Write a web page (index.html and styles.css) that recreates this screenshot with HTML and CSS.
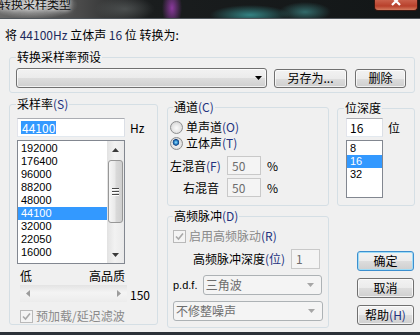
FILE: index.html
```html
<!DOCTYPE html>
<html lang="zh-CN">
<head>
    <meta charset="UTF-8">
    <title>转换采样类型</title>
    <link rel="stylesheet" href="styles.css">
</head>
<body>
<div class="window">
    <div class="titlebar">
        <span class="title">转换采样类型</span>
        <span class="close">
            <svg width="12" height="7" viewBox="0 0 12 7"><path d="M2 -3 L10 5 M10 -3 L2 5" stroke="#fff" stroke-width="2.2"/></svg>
        </span>
    </div>
    <div class="dialog">
        <p class="caption">将 <span class="lat">44100Hz</span> 立体声 <span class="lat">16</span> 位 转换为:</p>

        <fieldset class="group preset">
            <legend>转换采样率预设</legend>
            <div class="row">
                <div class="combo preset-combo">
                    <svg class="arrow" width="7" height="4" viewBox="0 0 7 4"><path d="M0 0 H7 L3.5 4Z" fill="#000"/></svg>
                </div>
                <button class="btn save">另存为...</button>
                <button class="btn del">删除</button>
            </div>
        </fieldset>

        <div class="columns">
            <!-- sample rate -->
            <fieldset class="group rate">
                <legend>采样率<span class="acc">(S)</span></legend>
                <div class="row">
                    <div class="edit rate-edit"><span class="sel">44100</span></div>
                    <span class="unit">Hz</span>
                </div>
                <div class="list rate-list">
                    <ul class="items">
                        <li>192000</li>
                        <li>176400</li>
                        <li>96000</li>
                        <li>88200</li>
                        <li>48000</li>
                        <li class="selected">44100</li>
                        <li>32000</li>
                        <li>22050</li>
                        <li>16000</li>
                    </ul>
                    <div class="vscroll">
                        <span class="sb-btn"><svg width="7" height="4" viewBox="0 0 7 4"><path d="M0 4 L3.5 0 L7 4Z" fill="#3a3a3a"/></svg></span>
                        <span class="thumb"><i></i><i></i><i></i></span>
                        <span class="sb-btn down"><svg width="7" height="4" viewBox="0 0 7 4"><path d="M0 0 H7 L3.5 4Z" fill="#3a3a3a"/></svg></span>
                    </div>
                </div>
                <div class="quality"><span>低</span><span>高品质</span></div>
                <div class="row slider-row">
                    <div class="hscroll">
                        <svg width="4" height="7" viewBox="0 0 4 7"><path d="M4 0 V7 L0 3.5Z" fill="#9c9c9c"/></svg>
                        <svg width="4" height="7" viewBox="0 0 4 7"><path d="M0 0 V7 L4 3.5Z" fill="#9c9c9c"/></svg>
                    </div>
                    <span class="value">150</span>
                </div>
                <div class="check disabled rate-check">
                    <span class="box"><svg width="9" height="9" viewBox="0 0 9 9"><path d="M1 4.5 L3.5 7 L8 1.5" fill="none" stroke="#a8a8a8" stroke-width="1.6"/></svg></span>
                    <span>预加载/延迟滤波</span>
                </div>
            </fieldset>

            <div class="col mid">
                <fieldset class="group channel">
                    <legend>通道<span class="acc">(C)</span></legend>
                    <div class="radio-row"><span class="radio"></span><span>单声道<span class="acc">(O)</span></span></div>
                    <div class="radio-row"><span class="radio on"></span><span>立体声<span class="acc">(T)</span></span></div>
                    <div class="mix-row">
                        <span class="mix-label">左混音<span class="acc">(F)</span></span>
                        <div class="edit off mix-edit">50</div>
                        <span class="pct">%</span>
                    </div>
                    <div class="mix-row second">
                        <span class="mix-label">右混音</span>
                        <div class="edit off mix-edit">50</div>
                        <span class="pct">%</span>
                    </div>
                </fieldset>

                <fieldset class="group dither">
                    <legend>高频脉冲<span class="acc">(D)</span></legend>
                    <div class="check disabled">
                        <span class="box"><svg width="9" height="9" viewBox="0 0 9 9"><path d="M1 4.5 L3.5 7 L8 1.5" fill="none" stroke="#a8a8a8" stroke-width="1.6"/></svg></span>
                        <span>启用高频脉动<span class="acc">(R)</span></span>
                    </div>
                    <div class="depth-row">
                        <span class="depth-label">高频脉冲深度<span class="acc">(位)</span></span>
                        <div class="edit off depth-edit">1</div>
                    </div>
                    <div class="pdf-row">
                        <span class="pdf">p.d.f.</span>
                        <div class="combo off pdf-combo">
                            <span>三角波</span>
                            <svg class="arrow" width="7" height="4" viewBox="0 0 7 4"><path d="M0 0 H7 L3.5 4Z" fill="#a6a6a6"/></svg>
                        </div>
                    </div>
                    <div class="combo off shape-combo">
                        <span>不修整噪声</span>
                        <svg class="arrow" width="7" height="4" viewBox="0 0 7 4"><path d="M0 0 H7 L3.5 4Z" fill="#a6a6a6"/></svg>
                    </div>
                </fieldset>
            </div>

            <div class="col right">
                <fieldset class="group bits">
                    <legend>位深度</legend>
                    <div class="row">
                        <div class="edit bits-edit">16</div>
                        <span class="unit">位</span>
                    </div>
                    <div class="list bits-list">
                        <ul class="items">
                            <li>8</li>
                            <li class="selected">16</li>
                            <li>32</li>
                        </ul>
                    </div>
                </fieldset>
                <div class="actions">
                    <button class="btn default">确定</button>
                    <button class="btn">取消</button>
                    <button class="btn">帮助<span class="acc">(H)</span></button>
                </div>
            </div>
        </div>
    </div>
</div>
</body>
</html>
```

FILE: styles.css
```css
*{
    margin:0;
    padding:0;
    box-sizing:border-box;
}
body{
    width:420px;
    height:335px;
    overflow:hidden;
    background:#f0f0f0;
    font-family:"Noto Sans CJK SC","Liberation Sans",sans-serif;
    font-size:12px;
    line-height:14px;
    color:#000;
}
ul{
    list-style:none;
}
.window{
    height:335px;
    display:flex;
    flex-direction:column;
    border-bottom:3px solid #2c3138;
}

/* aero title bar */
.titlebar{
    height:19px;
    flex:none;
    display:flex;
    align-items:flex-start;
    border-bottom:1px solid #50565c;
    background:
        radial-gradient(ellipse 44px 14px at 34px 5px, rgba(225,225,225,.75), rgba(225,225,225,0)),
        radial-gradient(ellipse 10px 20px at 172px 8px, rgba(150,60,170,.9), rgba(150,60,170,0)),
        radial-gradient(ellipse 40px 10px at 250px 15px, rgba(60,165,165,.75), rgba(60,165,165,0)),
        radial-gradient(ellipse 26px 10px at 305px 12px, rgba(70,160,160,.6), rgba(70,160,160,0)),
        radial-gradient(ellipse 30px 12px at 125px 9px, rgba(95,100,100,.6), rgba(95,100,100,0)),
        linear-gradient(90deg, #6a6a6a 0, #4a4a4a 80px, #1a1d1e 150px, #121617 100%);
}
.title{
    margin:-2px 0 0 -1px;
    font-size:12px;
    line-height:12px;
    color:#111;
    text-shadow:0 0 4px #fff, 0 0 7px #ddd;
}
.close{
    margin-left:auto;
    margin-right:2px;
    width:44px;
    height:11px;
    display:flex;
    justify-content:center;
    align-items:flex-start;
    border:1px solid #3a1710;
    border-top:none;
    border-radius:0 0 4px 4px;
    background:linear-gradient(#c9604b, #b8402b 60%, #d27a5e);
}

.dialog{
    flex:1;
    padding:8px 5px 0 9px;
}
.caption{
    margin-left:-4px;
    line-height:16px;
}
.lat{
    color:#1d2a5c;
}
.acc{
    color:#22327e;
}

/* group boxes */
.group{
    border:1px solid #d5dfe5;
    border-radius:3px;
    min-width:0;
    padding:0 6px;
}
.group legend{
    padding:0 1px;
    line-height:14px;
}
.row{
    display:flex;
    align-items:center;
}

/* push buttons */
.btn{
    font:inherit;
    line-height:16px;
    color:#000;
    height:20px;
    border:1px solid #707070;
    border-radius:3px;
    background:linear-gradient(#f2f2f2 0%, #ebebeb 50%, #dddddd 51%, #cfcfcf 100%);
    box-shadow:inset 0 0 0 1px rgba(255,255,255,.7);
}
.btn.default{
    border-color:#3c8fcf;
    box-shadow:inset 0 0 0 1px #9fdcf6;
}
.combo{
    height:20px;
    display:flex;
    align-items:center;
    border-radius:3px;
}
.combo .arrow{
    margin-left:auto;
}
.preset{
    margin-top:7px;
    padding:4px 6px 4px;
}
.preset-combo{
    width:251px;
    border:1px solid #707070;
    background:linear-gradient(#f2f2f2 0%, #ebebeb 50%, #dddddd 51%, #cfcfcf 100%);
    box-shadow:inset 0 0 0 1px rgba(255,255,255,.7);
    padding-right:4px;
}
.save{
    width:73px;
    height:19px;
    margin-left:7px;
}
.del{
    width:51px;
    height:19px;
    margin-left:8px;
}

/* edits and lists */
.edit{
    height:19px;
    background:#fff;
    border:1px solid;
    border-color:#abadb3 #dbdfe6 #e3e9ef #e2e3ea;
    padding:0 2px;
    line-height:17px;
}
.edit.off{
    background:#f4f4f4;
    border-color:#c9c9c9;
    color:#6d6d6d;
}
.sel{
    display:inline-block;
    background:#3399ff;
    color:#fff;
    line-height:13px;
    padding:0 1px;
}
.list{
    display:flex;
    background:#fff;
    border:1px solid #828790;
}
.items{
    flex:1;
    padding-top:1px;
    font-family:"Liberation Sans",sans-serif;
    font-size:11px;
}
.items li{
    line-height:13px;
    padding-left:3px;
}
.items li.selected{
    background:#3399ff;
    color:#fff;
}

/* sample rate */
.columns{
    display:flex;
    align-items:flex-start;
    margin-top:4px;
}
.rate{
    width:149px;
    padding:7px 6px 1px;
}
.rate-edit{
    width:108px;
    margin-left:1px;
    padding-left:3px;
}
.unit{
    margin-left:5px;
}
.rate-list{
    width:108px;
    height:124px;
    margin:3px 0 0 1px;
}
.vscroll{
    width:17px;
    display:flex;
    flex-direction:column;
    background:linear-gradient(90deg, #e2e2e2, #f2f2f2 45%, #eaeaea);
}
.sb-btn{
    height:17px;
    display:flex;
    justify-content:center;
    align-items:center;
}
.sb-btn.down{
    margin-top:auto;
}
.thumb{
    height:63px;
    margin:2px 1px 0;
    display:flex;
    flex-direction:column;
    justify-content:center;
    align-items:center;
    gap:1px;
    border:1px solid #979797;
    border-radius:3px;
    background:linear-gradient(90deg, #f6f6f6, #e9e9e9 45%, #d9d9d9 55%, #cfcfcf);
}
.thumb i{
    width:7px;
    height:2px;
    border-top:1px solid #4a4a4a;
    border-bottom:1px solid #fff;
}
.quality{
    display:flex;
    justify-content:space-between;
    width:105px;
    margin:5px 0 0 4px;
}
.slider-row{
    margin-top:2px;
}
.hscroll{
    width:107px;
    height:17px;
    margin-left:4px;
    padding:0 6px;
    display:flex;
    justify-content:space-between;
    align-items:center;
    background:linear-gradient(#e3e3e3, #f4f4f4 45%, #ececec);
}
.value{
    margin-left:3px;
    padding-top:3px;
}

/* check boxes and radios */
.check{
    display:flex;
    align-items:center;
    height:14px;
    gap:3px;
}
.check.disabled{
    color:#8a8a8a;
}
.check .box{
    width:13px;
    height:13px;
    display:flex;
    justify-content:center;
    align-items:center;
    border:1px solid #b9b9b9;
    background:#f4f4f4;
}
.rate-check{
    margin:7px 0 0 4px;
}
.radio-row{
    display:flex;
    align-items:center;
    height:16px;
    gap:3px;
}
.radio{
    width:13px;
    height:13px;
    border-radius:50%;
    border:1px solid #8d8e8f;
    background:radial-gradient(circle at 50% 55%, #fbfbfb 0, #e8e8e8 45%, #c9c9c9 100%);
}
.radio.on{
    background:
        radial-gradient(circle at 45% 40%, #9be3ff 0, #2c86c9 1.8px, #12407f 3px, rgba(18,64,127,0) 3.6px),
        radial-gradient(circle at 50% 55%, #fbfbfb 0, #e8e8e8 45%, #c9c9c9 100%);
}

/* channel */
.col{
    display:flex;
    flex-direction:column;
}
.mid{
    width:162px;
    margin:3px 0 0 9px;
}
.channel{
    padding:5px 6px 8px 2px;
}
.channel legend{
    margin-left:3px;
}
.mix-row{
    display:flex;
    align-items:center;
    margin-top:5px;
}
.mix-row.second{
    margin-top:3px;
}
.mix-label{
    width:49px;
    text-align:right;
    white-space:nowrap;
}
.mix-edit{
    width:34px;
    margin-left:8px;
    padding-left:4px;
}
.pct{
    margin-left:6px;
}

/* dither */
.dither{
    margin-top:3px;
    padding:6px 6px 6px 5px;
}
.depth-row{
    display:flex;
    align-items:center;
    margin:6px 0 0 20px;
}
.depth-label{
    width:92px;
    white-space:nowrap;
}
.depth-edit{
    width:29px;
    height:20px;
    margin-left:6px;
    padding-left:4px;
    line-height:18px;
}
.pdf-row{
    display:flex;
    align-items:center;
    margin-top:6px;
}
.pdf{
    width:26px;
    font-family:"Liberation Sans",sans-serif;
    font-size:11px;
}
.combo.off{
    border:1px solid #adb2b5;
    background:#f4f4f4;
    color:#6d6d6d;
    padding:0 7px 0 2px;
}
.pdf-combo{
    width:120px;
    margin-left:4px;
}
.shape-combo{
    width:150px;
    margin-top:6px;
}

/* bit depth */
.right{
    width:78px;
    margin:4px 0 0 8px;
}
.bits{
    padding:3px 6px 7px 8px;
}
.bits legend{
    margin-left:-2px;
}
.bits-edit{
    width:37px;
    padding-left:3px;
}
.bits-list{
    width:37px;
    height:58px;
    margin-top:3px;
}
.actions{
    display:flex;
    flex-direction:column;
    align-items:flex-end;
    gap:7px;
    margin:45px 1px 0 0;
}
.actions .btn{
    width:57px;
}
```
